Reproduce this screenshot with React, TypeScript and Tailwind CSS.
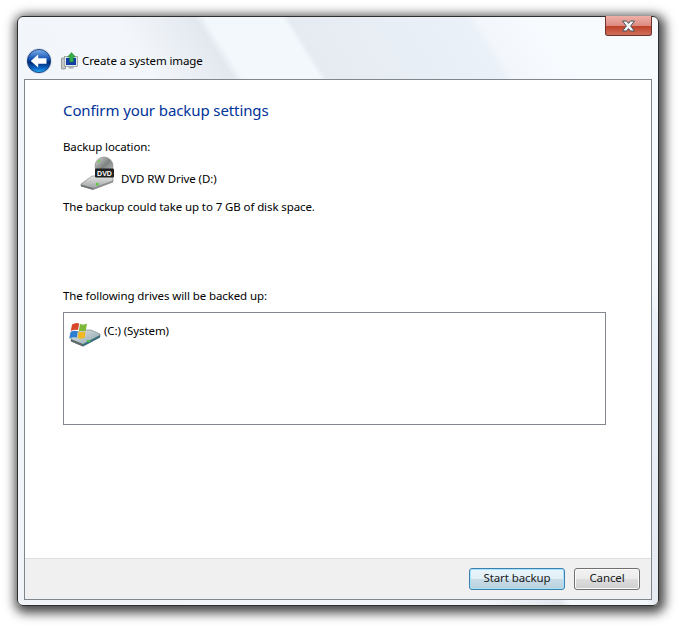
import React from 'react';

const font = 'font-["Noto_Sans","Open_Sans",sans-serif]';
const body = 'text-[11.5px] leading-[18px] tracking-[-0.1px] text-black';

function BackIcon() {
  return (
    <svg width="26" height="26" viewBox="0 0 26 26">
      <defs>
        <linearGradient id="backFill" x1="0" y1="0" x2="0" y2="1">
          <stop offset="0" stopColor="#7fb0ea" />
          <stop offset="0.45" stopColor="#0c4cb0" />
          <stop offset="0.55" stopColor="#012a70" />
          <stop offset="0.8" stopColor="#0b62c4" />
          <stop offset="1" stopColor="#2bb4f0" />
        </linearGradient>
      </defs>
      <circle cx="13" cy="13" r="12.7" fill="#d3dce8" />
      <circle cx="13" cy="13" r="11.6" fill="url(#backFill)" stroke="#0e2f70" strokeWidth="0.8" />
      <path d="M4.8 13 L12.2 6.4 V10.2 H20.5 V15.8 H12.2 V19.6 Z" fill="#fff" />
    </svg>
  );
}

function BackupIcon() {
  return (
    <svg width="17" height="18" viewBox="0 0 17 18">
      <rect x="0.5" y="6" width="4" height="11" rx="0.5" fill="#c4c8c4" stroke="#777f7a" strokeWidth="0.7" />
      <rect x="3.5" y="4.5" width="13" height="10" fill="#e3e6e6" stroke="#8d9698" strokeWidth="0.7" />
      <rect x="5" y="6" width="10" height="7" fill="#133fa8" />
      <rect x="7.5" y="14.5" width="5" height="2" fill="#a9afb0" />
      <path d="M10.5 0.5 L14.5 5 H12.3 V10 H8.7 V5 H6.5 Z" fill="#33b04a" stroke="#1c7a30" strokeWidth="0.5" />
    </svg>
  );
}

function CloseGlyph() {
  return (
    <svg width="15" height="12" viewBox="0 0 15 12">
      <path
        d="M1.5 1 H5.5 L7.5 3.4 L9.5 1 H13.5 L9.7 6 L13.5 11 H9.5 L7.5 8.6 L5.5 11 H1.5 L5.3 6 Z"
        fill="#f4f6f8"
        stroke="#47505c"
        strokeWidth="1"
        strokeLinejoin="round"
      />
    </svg>
  );
}

function DvdDriveIcon() {
  return (
    <svg width="35" height="36" viewBox="0 0 35 36">
      <defs>
        <linearGradient id="discFill" x1="0" y1="0" x2="1" y2="1">
          <stop offset="0" stopColor="#d6d9d7" />
          <stop offset="0.5" stopColor="#7f8382" />
          <stop offset="1" stopColor="#c4c6c5" />
        </linearGradient>
        <linearGradient id="dvdBody" x1="0" y1="0" x2="0" y2="1">
          <stop offset="0" stopColor="#e4e5e5" />
          <stop offset="1" stopColor="#989c9c" />
        </linearGradient>
      </defs>
      <circle cx="24" cy="10" r="9" fill="url(#discFill)" stroke="#7f8382" strokeWidth="0.6" />
      <circle cx="19" cy="5" r="1.6" fill="#86c66b" />
      <path d="M12 20 L1 28 V30 L13 33.5 L33 26 V22 L30 20 Z" fill="url(#dvdBody)" stroke="#7c8080" strokeWidth="0.6" />
      <path d="M1 28.5 L13 32 V33.8 L1 30.3 Z" fill="#6e7272" />
      <path d="M13 32 L33 24.5 V26 L13 33.8 Z" fill="#8a8e8e" />
      <rect x="16" y="27" width="2.5" height="2.5" fill="#5fc43e" />
      <rect x="15" y="12.5" width="19" height="9" rx="1" fill="#1f2122" />
      <text x="24.5" y="19.7" textAnchor="middle" fontSize="7" fontWeight="700" fill="#fff" fontFamily="Liberation Sans, sans-serif">DVD</text>
    </svg>
  );
}

function SystemDriveIcon() {
  return (
    <svg width="33" height="26" viewBox="0 0 33 26">
      <defs>
        <linearGradient id="sysBody" x1="0" y1="0" x2="1" y2="1">
          <stop offset="0" stopColor="#dfe6e8" />
          <stop offset="1" stopColor="#8aa0a6" />
        </linearGradient>
      </defs>
      <path d="M12 9 L3 17 L3 20 L15 25 L32 16 V13 L23 9 Z" fill="url(#sysBody)" stroke="#6f8083" strokeWidth="0.6" />
      <path d="M3 18 L15 23 V25.5 L3 20.5 Z" fill="#5c6a6c" />
      <path d="M15 23 L32 14 V16.5 L15 25.5 Z" fill="#3a6f7c" />
      <rect x="19" y="19" width="3" height="2" fill="#4cc24c" />
      <path d="M4 3.5 Q8 1 11.2 2.5 L10 9 Q6.5 8 2.8 10 Z" fill="#d9472b" />
      <path d="M12 2.7 Q15.5 4.5 19 2.5 L17.8 9.5 Q14 11 10.9 9.4 Z" fill="#7fb93a" />
      <path d="M2.6 10.8 Q6.5 9 9.8 10.2 L8.8 16.5 Q5 15.5 1.2 17.5 Z" fill="#2f7fd1" />
      <path d="M10.7 10.3 Q14 12 17.6 10.2 L16.6 16.8 Q12.5 18.5 9.7 16.7 Z" fill="#f2b81f" />
    </svg>
  );
}

function WinButton({ label, focused }: { label: string; focused?: boolean }) {
  return (
    <button
      className={
        focused
          ? 'h-[22px] w-[96px] rounded-[3px] border border-[#3c7fb1] bg-[linear-gradient(#e9f5fb_0%,#e2eff6_50%,#c9dde8_50%,#b9d0dd_100%)] pb-[2px] text-[11.5px] tracking-[-0.1px] text-[#1a1a1a] shadow-[inset_0_0_0_1px_#a6e4fb]'
          : 'h-[22px] w-[66px] rounded-[3px] border border-[#707070] bg-[linear-gradient(#f2f2f2_0%,#ebebeb_50%,#dddddd_50%,#cfcfcf_100%)] pb-[2px] text-[11.5px] tracking-[-0.1px] text-[#1a1a1a] shadow-[inset_0_0_0_1px_#fbfbfb]'
      }
    >
      {label}
    </button>
  );
}

export default function App() {
  return (
    <div className={`h-[627px] w-[678px] overflow-hidden bg-white pl-[17px] pt-[16px] ${font}`}>
      {/* Window frame */}
      <div className="relative flex h-[590px] w-[642px] flex-col rounded-[6px] border border-[#2f2f2f] bg-[linear-gradient(58deg,#f1f5fa_0%,#f3f7fb_46%,#e3e8ef_54%,#f3f8fd_55%,#f3f8fd_62.6%,#e6ebf2_63.3%,#ebf1f8_81%,#f3f7fc_82%,#f8fbfe_89%,#f8fbfe_100%)] px-[6px] pb-[5px] shadow-[2px_3px_11px_4px_rgba(0,0,0,0.72)]">
        {/* Close button */}
        <div className="absolute right-[6px] top-[-1px] flex h-[20px] w-[47px] items-center justify-center rounded-b-[3px] border border-t-0 border-[#6b332c] bg-[linear-gradient(#eeb0a8_0%,#dd8b80_50%,#bf4229_55%,#d0705a_100%)]">
          <CloseGlyph />
        </div>

        {/* Nav row */}
        <div className="flex h-[62px] items-end gap-[9px] pb-[5px] pl-[2px]">
          <BackIcon />
          <div className="flex items-center gap-[4px] pb-[4px]">
            <BackupIcon />
            <span className={body}>Create a system image</span>
          </div>
        </div>

        {/* Client area */}
        <div className="flex flex-1 flex-col border border-[#7f878d] bg-white">
          <div className="flex-1 pl-[38px] pr-[45px] pt-[19px]">
            <h1 className="text-[15px] font-normal leading-[22px] tracking-[-0.1px] text-[#003399]">Confirm your backup settings</h1>
            <p className={`mt-[17px] ${body}`}>Backup location:</p>
            <div className="ml-[17px] flex items-center gap-[6px]">
              <DvdDriveIcon />
              <span className={`mt-[9px] ${body}`}>DVD RW Drive (D:)</span>
            </div>
            <p className={`mt-[6px] ${body}`}>The backup could take up to 7 GB of disk space.</p>
            <p className={`mt-[71px] ${body}`}>The following drives will be backed up:</p>
            <div className="mt-[7px] flex h-[113px] items-start gap-[3px] border border-[#828790] pl-[4px] pt-[8px]">
              <SystemDriveIcon />
              <span className={`mt-[1px] ${body}`}>(C:) (System)</span>
            </div>
          </div>

          {/* Footer */}
          <div className="flex h-[41px] items-center justify-end gap-[9px] border-t border-[#dfdfdf] bg-[#f0f0f0] pr-[11px]">
            <WinButton label="Start backup" focused />
            <WinButton label="Cancel" />
          </div>
        </div>
      </div>
    </div>
  );
}
